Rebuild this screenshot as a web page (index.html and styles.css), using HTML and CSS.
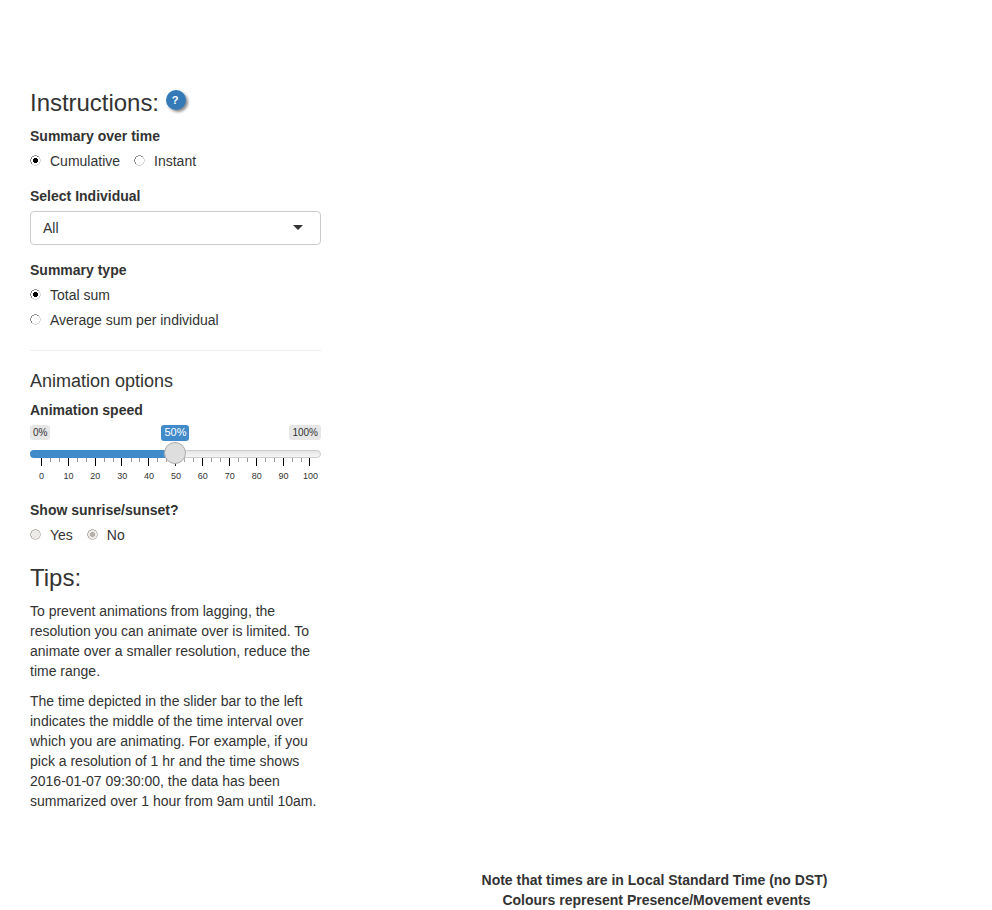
FILE: index.html
```html
<!DOCTYPE html>
<html lang="en">
<head>
<meta charset="utf-8">
<title>Animation controls</title>
<link rel="stylesheet" href="styles.css">
</head>
<body>
<svg width="0" height="0" class="defs">
  <symbol id="ring" viewBox="0 0 11 11">
    <path class="dark" d="M4 .5h3M2 1.5h2M7 1.5h2M1 2.5h1M1 3.5h1M0 4.5h1M0 5.5h1M0 6.5h1M1 7.5h1M1 8.5h1"/>
    <path class="light" d="M9 2.5h1M9 3.5h1M10 4.5h1M10 5.5h1M10 6.5h1M9 7.5h1M9 8.5h1M7 9.5h2M2 9.5h2M4 10.5h3"/>
  </symbol>
  <symbol id="dot" viewBox="0 0 11 11"><path d="M4 3h3v1h1v3h-1v1h-3v-1h-1v-3h1z"/></symbol>
</svg>
<main class="controls">
  <h3 class="instructions">Instructions: <button class="help" type="button">?</button></h3>
  <section class="group">
    <div class="label">Summary over time</div>
    <div class="options inline">
      <label><svg class="radio"><use href="#ring"/><use href="#dot"/></svg>Cumulative</label>
      <label><svg class="radio"><use href="#ring"/></svg>Instant</label>
    </div>
  </section>
  <section class="group">
    <div class="label">Select Individual</div>
    <div class="select"><span>All</span><i class="caret"></i></div>
  </section>
  <section class="group">
    <div class="label">Summary type</div>
    <div class="options stacked">
      <label><svg class="radio"><use href="#ring"/><use href="#dot"/></svg>Total sum</label>
      <label><svg class="radio"><use href="#ring"/></svg>Average sum per individual</label>
    </div>
  </section>
  <hr>
  <h4>Animation options</h4>
  <section class="speed">
    <div class="label">Animation speed</div>
    <div class="bubbles"><span class="end">0%</span><span class="current">50%</span><span class="end">100%</span></div>
    <div class="track"><div class="fill"></div><div class="handle"></div></div>
    <svg class="ticks" width="291" height="8" viewBox="0 0 291 8" shape-rendering="crispEdges">
      <path stroke="#999" d="M20.5 0v4M29.5 0v4M47.5 0v4M56.5 0v4M74.5 0v4M83.5 0v4M101.5 0v4M109.5 0v4M127.5 0v4M136.5 0v4M154.5 0v4M163.5 0v4M181.5 0v4M190.5 0v4M208.5 0v4M217.5 0v4M235.5 0v4M244.5 0v4M262.5 0v4M271.5 0v4"/>
      <path stroke="#000" d="M11.5 0v8M38.5 0v8M65.5 0v8M91.5 0v8M118.5 0v8M145.5 0v8M172.5 0v8M199.5 0v8M226.5 0v8M253.5 0v8M279.5 0v8"/>
    </svg>
    <div class="scale"><span>0</span><span>10</span><span>20</span><span>30</span><span>40</span><span>50</span><span>60</span><span>70</span><span>80</span><span>90</span><span>100</span></div>
  </section>
  <section class="group sunrise">
    <div class="label">Show sunrise/sunset?</div>
    <div class="options inline">
      <label><svg class="radio disabled"><use href="#ring"/></svg>Yes</label>
      <label><svg class="radio disabled"><use href="#ring"/><use href="#dot"/></svg>No</label>
    </div>
  </section>
  <h3 class="tips">Tips:</h3>
  <p>To prevent animations from lagging, the resolution you can animate over is limited. To animate over a smaller resolution, reduce the time range.</p>
  <p>The time depicted in the slider bar to the left indicates the middle of the time interval over which you are animating. For example, if you pick a resolution of 1 hr and the time shows 2016-01-07 09:30:00, the data has been summarized over 1 hour from 9am until 10am.</p>
</main>
<footer><div>Note that times are in Local Standard Time (no DST)</div><div class="second">Colours represent Presence/Movement events</div></footer>
</body>
</html>
```

FILE: styles.css
```css
* { box-sizing: border-box; }
body {
  margin: 0;
  height: 910px;
  overflow: hidden;
  background: #fff;
  color: #333;
  font: 14px/20px "Liberation Sans", Arial, sans-serif;
}
.defs { display: block; }
.controls { width: 291px; margin-left: 30px; padding-top: 90px; }
h3, h4 { margin: 0; font-weight: 500; }
h3 { font-size: 24px; line-height: 26px; }
.instructions { display: flex; gap: 7px; margin-bottom: 10px; letter-spacing: -.03px; }
.help {
  width: 20px;
  height: 20px;
  padding: 0 2px 0 0;
  border: 0;
  border-radius: 50%;
  background: #337ab7;
  box-shadow: 2px 2px 3px #888;
  color: #fff;
  font: bold 11px/18px "Liberation Sans", Arial, sans-serif;
}
.group { margin-bottom: 15px; }
.label { font-weight: 700; margin-bottom: 5px; }
.options { display: flex; }
.inline { gap: 14px; }
.stacked { flex-direction: column; gap: 5px; }
.options label { display: flex; align-items: flex-start; }
.radio {
  --dark: #858585;
  --light: #d4d4d4;
  flex: none;
  width: 11px;
  height: 11px;
  margin: 4px 9px 0 0;
  border-radius: 50%;
  fill: #000;
  shape-rendering: crispEdges;
}
.dark { stroke: var(--dark); }
.light { stroke: var(--light); }
.disabled { --dark: #b5b0aa; --light: #cbc6c1; background: #edebe8; fill: #b5b0aa; }
.select {
  display: flex;
  align-items: center;
  justify-content: space-between;
  height: 34px;
  padding: 0 17px 0 12px;
  border: 1px solid #ccc;
  border-radius: 4px;
}
.caret { margin-bottom: 1px; border: 5px solid transparent; border-top-color: #333; border-bottom: 0; }
hr { margin: 20px 0; border: 0; border-top: 1px solid #eee; }
h4 { height: 19px; margin-bottom: 10px; font-size: 18px; line-height: 20px; }
.bubbles { display: flex; justify-content: space-between; align-items: flex-start; height: 25px; }
.bubbles span { border-radius: 3px; }
.end { height: 15px; padding: 0 3px; background: #e6e6e6; color: #333; font-size: 10px; line-height: 15px; }
.current { height: 16px; margin-left: 11px; padding: 0 3px; background: #428bca; color: #fff; font-size: 11px; line-height: 15px; }
.track {
  position: relative;
  height: 8px;
  border: 1px solid #ccc;
  border-radius: 8px;
  background: linear-gradient(#ddd -50%, #fff 150%);
}
.fill { width: 145px; height: 8px; margin: -1px; border-radius: 8px 0 0 8px; background: #428bca; }
.handle {
  position: absolute;
  left: 133px;
  top: -9px;
  width: 22px;
  height: 22px;
  border: 1px solid #ababab;
  border-radius: 50%;
  background: #dedede;
  box-shadow: 1px 1px 3px rgba(255, 255, 255, .3);
}
.ticks { display: block; }
.scale { display: flex; justify-content: space-between; padding: 0 10.5px 0 11.5px; font-size: 9px; line-height: 20px; }
.scale span { display: flex; justify-content: center; width: 0; }
.sunrise { margin-top: 14px; margin-bottom: 20px; }
.tips { margin-bottom: 10px; }
p { margin: 0 0 10px; }
footer { width: 647px; margin: 59px 0 0 331px; font-weight: 700; text-align: center; }
.second { padding-left: 4px; }
```
